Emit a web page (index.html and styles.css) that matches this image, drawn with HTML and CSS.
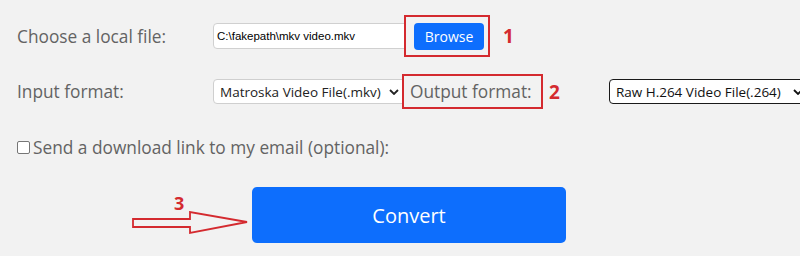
FILE: index.html
```html
<!DOCTYPE html>
<html lang="en">
<head>
  <meta charset="UTF-8" />
  <title>Convert MKV</title>
  <link rel="stylesheet" href="styles.css">
</head>
<body>
  <div class="form">
    <div class="row row-file">
      <div class="label">Choose a local file:</div>
      <div class="textbox">C:\fakepath\mkv video.mkv</div>
      <div class="mark mark-browse"><button class="btn-browse">Browse</button></div>
      <span class="num">1</span>
    </div>
    <div class="row row-format">
      <div class="label">Input format:</div>
      <div class="select select-in">
        <span>Matroska Video File(.mkv)</span>
        <svg class="chev" width="10" height="6" viewBox="0 0 10 6"><polyline points="1,1 5,5 9,1" fill="none" stroke="#222" stroke-width="1.8"/></svg>
      </div>
      <div class="mark mark-out">Output format:</div>
      <span class="num">2</span>
      <div class="select select-out">
        <span>Raw H.264 Video File(.264)</span>
        <svg class="chev" width="10" height="6" viewBox="0 0 10 6"><polyline points="1,1 5,5 9,1" fill="none" stroke="#111" stroke-width="1.8"/></svg>
      </div>
    </div>
    <div class="row row-mail">
      <span class="check"></span>
      <span class="mail-text">Send a download link to my email (optional):</span>
    </div>
    <div class="row row-convert">
      <div class="pointer">
        <span class="num num-3">3</span>
        <svg width="118" height="24" viewBox="0 0 118 24">
          <polygon points="1,8 58,8 58,1 115,11 58,22 58,16 1,16" fill="none" stroke="#d42a2f" stroke-width="1.8" stroke-linejoin="miter"/>
        </svg>
      </div>
      <button class="btn-convert">Convert</button>
    </div>
  </div>
</body>
</html>
```

FILE: styles.css
```css
:root {
  --blue: #0d6efd;
  --red: #d42a2f;
  --text: #636363;
  --bg: #f2f2f2;
}
* { box-sizing: border-box; }
html, body {
  margin: 0; padding: 0;
  background: var(--bg);
  font-family: 'Open Sans', 'Noto Sans', sans-serif;
  overflow: hidden;
}
.form { padding: 15px 0 0 17px; width: 820px; }
.row { display: flex; align-items: center; }
.label {
  width: 196px;
  font-size: 17.3px; color: var(--text);
}
.row-file { height: 42px; }
.textbox {
  width: 195px; height: 26px;
  background: #fff; border: 1px solid #d0d0d0; border-radius: 4px;
  font-family: 'Liberation Sans', Arial, sans-serif; font-size: 11.5px; color: #000;
  display: flex; align-items: center; padding-left: 3px;
}
.mark {
  border: 2px solid var(--red);
  background: var(--bg);
}
.mark-browse {
  margin-left: -4px;
  height: 42px;
  padding: 6px 4px 5px 8px;
  display: flex; align-items: center;
}
.btn-browse {
  width: 70px; height: 27px;
  background: var(--blue); color: #fff;
  border: none; border-radius: 4px;
  font-family: 'Open Sans', sans-serif; font-size: 14px;
}
.num {
  color: var(--red);
  font-family: 'Open Sans', sans-serif; font-weight: bold; font-size: 19px;
}
.row-file .num { margin-left: 13px; }
.row-format { margin-top: 17px; height: 35px; }
.select {
  height: 25px;
  background: #fff; border-radius: 4px;
  display: flex; align-items: center;
  font-size: 13.5px; color: #222;
}
.select-in {
  width: 195px;
  border: 1px solid #cfcfcf;
  padding: 0 0 0 6px;
  justify-content: space-between;
}
.select-in .chev { margin-right: 8px; }
.select-out {
  width: 200px;
  border: 1.5px solid #1a1a1a;
  margin-left: 49px;
  padding: 0 0 0 6px;
  color: #111;
}
.select-out .chev { margin-left: 12px; }
.mark-out {
  margin-left: -6px;
  width: 141px; height: 35px;
  padding: 0 0 0 6px;
  display: flex; align-items: center;
  font-size: 17.3px; color: var(--text);
}
.row-format .num { margin-left: 6px; }
.row-mail { margin-top: 26px; height: 24px; }
.check {
  width: 13px; height: 13px;
  border: 1px solid #767676; border-radius: 2px;
  background: #fff;
  margin-right: 3px;
}
.mail-text { font-size: 17.3px; color: var(--text); }
.row-convert { margin-top: 28px; height: 56px; }
.pointer {
  margin-left: 115px;
  width: 120px;
  display: flex; flex-direction: column; align-items: flex-start;
}
.num-3 {
  font-size: 18px; line-height: 16px;
  margin-left: 42px;
}
.btn-convert {
  width: 314px; height: 56px;
  background: var(--blue); color: #fff;
  border: none; border-radius: 5px;
  font-family: 'Open Sans', sans-serif; font-size: 20px;
}
```
